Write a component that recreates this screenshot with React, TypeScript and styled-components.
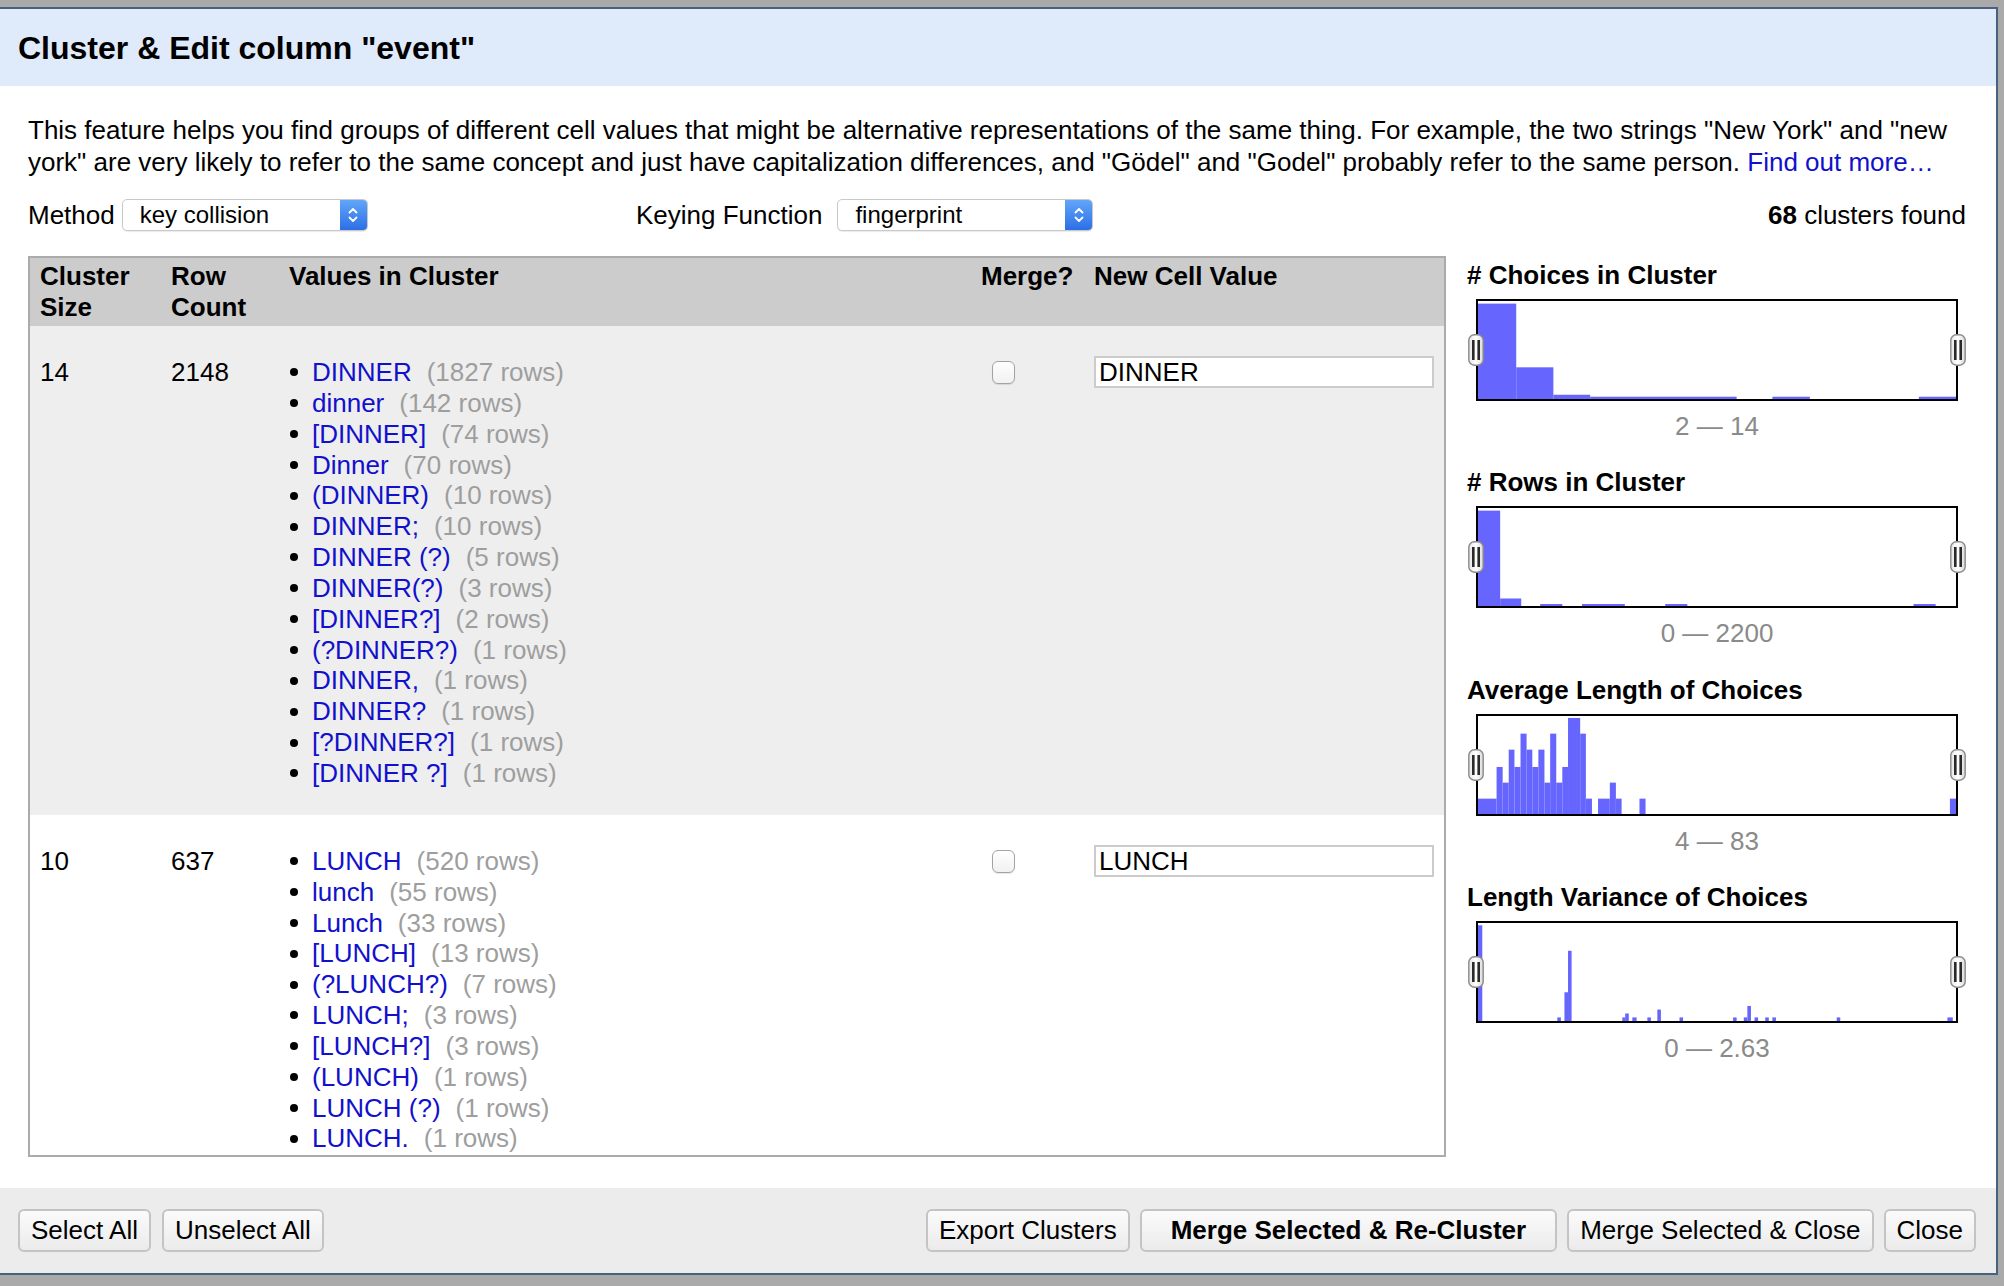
import React from "react";
import styled, { createGlobalStyle } from "styled-components";

const GlobalStyle = createGlobalStyle`
  html, body { margin: 0; padding: 0; }
  body {
    background: #aaaaaa;
    font-family: "Liberation Sans", Arial, Helvetica, sans-serif;
    font-size: 26px;
    color: #000;
    overflow: hidden;
  }
  * { box-sizing: border-box; }
`;

const Page = styled.div`
  width: 2004px;
  height: 1286px;
  padding-top: 7px;
  overflow: hidden;
  background: #aaaaaa;
`;

const Dialog = styled.div`
  margin-left: -2px;
  width: 2000px;
  height: 1268px;
  border: 2px solid #47617f;
  background: #fff;
  display: flex;
  flex-direction: column;
`;

const Header = styled.div`
  height: 77px;
  flex: none;
  background: #dfeafb;
  display: flex;
  align-items: center;
  padding-left: 18px;
`;

const Title = styled.h1`
  margin: 0;
  font-size: 32px;
  font-weight: bold;
  line-height: 1;
`;

const Body = styled.div`
  flex: 1;
  padding: 28px 28px 0 28px;
  display: flex;
  flex-direction: column;
`;

const Description = styled.p`
  margin: 0;
  line-height: 32px;
`;

const Link = styled.a`
  color: #1111cc;
  text-decoration: none;
`;

const Controls = styled.div`
  margin-top: 21px;
  height: 32px;
  display: grid;
  grid-template-columns: 608px auto 1fr;
  align-items: center;
`;

const Field = styled.div<{ $gap: number }>`
  display: flex;
  align-items: center;
  gap: ${(p) => p.$gap}px;
`;

const Select = styled.div<{ $w: number }>`
  width: ${(p) => p.$w}px;
  height: 32px;
  border: 1px solid #c9c9c9;
  border-radius: 5px;
  background: #fff;
  box-shadow: 0 1px 1px rgba(0, 0, 0, 0.08);
  display: flex;
  align-items: center;
  font-size: 24px;
  padding-left: 17px;
  overflow: hidden;
`;

const SelectArrow = styled.span`
  margin-left: auto;
  width: 27px;
  height: 100%;
  background: linear-gradient(#62a6f9, #2c6fe6);
  display: flex;
  align-items: center;
  justify-content: center;
`;

const Count = styled.div`
  text-align: right;
  padding-right: 2px;
`;

const Main = styled.div`
  margin-top: 25px;
  display: flex;
  align-items: flex-start;
`;

const Table = styled.div`
  width: 1418px;
  height: 901px;
  flex: none;
  border: 2px solid #ababab;
  display: flex;
  flex-direction: column;
  overflow: hidden;
`;

const cols = "131px 118px 692px 113px 1fr";

const HeadRow = styled.div`
  display: grid;
  grid-template-columns: ${cols};
  background: #cccccc;
  height: 68px;
  flex: none;
`;

const HeadCell = styled.div`
  padding: 3px 10px 0 10px;
  font-weight: bold;
  line-height: 31px;
`;

const Rows = styled.div`
  flex: 1;
  overflow: hidden;
`;

const Row = styled.div<{ $shade: boolean }>`
  display: grid;
  grid-template-columns: ${cols};
  background: ${(p) => (p.$shade ? "#eeeeee" : "#ffffff")};
`;

const Cell = styled.div`
  padding: 31px 10px 26px 10px;
  line-height: 30.85px;
`;

const Line = styled.div`
  height: 30.85px;
  display: flex;
  align-items: center;
`;

const ValueList = styled.ul`
  margin: 0;
  padding: 0;
  list-style: none;
`;

const ValueItem = styled.li`
  display: flex;
  align-items: center;
  height: 30.85px;
  white-space: nowrap;
  &::before {
    content: "";
    width: 8px;
    height: 8px;
    border-radius: 50%;
    background: #000;
    margin: 0 14px 0 1px;
    flex: none;
  }
`;

const ValueLink = styled.a`
  color: #1111cc;
  text-decoration: none;
`;

const RowCount = styled.span`
  color: #9e9e9e;
  margin-left: 15px;
`;

const Check = styled.span`
  width: 23px;
  height: 23px;
  margin-left: 11px;
  border: 1.5px solid #a3a3a3;
  border-radius: 6px;
  background: linear-gradient(#ffffff, #f1f1f1);
  box-shadow: 0 1px 1px rgba(0, 0, 0, 0.1);
`;

const TextInput = styled.input`
  width: 340px;
  height: 32px;
  border: 2px solid #cccccc;
  padding: 0 3px;
  font-family: inherit;
  font-size: 26px;
  color: #000;
  background: #fff;
  outline: none;
`;

const Side = styled.div`
  margin-left: 21px;
  flex: 1;
  padding-top: 4px;
  display: flex;
  flex-direction: column;
`;

const Facet = styled.section`
  display: flex;
  flex-direction: column;
  margin-bottom: 25.3px;
`;

const FacetTitle = styled.div`
  font-weight: bold;
  line-height: 31px;
`;

const ChartBox = styled.div`
  position: relative;
  margin: 8px 0 0 9px;
  width: 482px;
  height: 102px;
  border: 2px solid #000;
  background: #fff;
`;

const Handle = styled.span<{ $side: "left" | "right" }>`
  position: absolute;
  top: 50%;
  ${(p) => p.$side}: -10px;
  transform: translateY(-50%);
  width: 16px;
  height: 32px;
  display: block;
`;

const RangeLabel = styled.div`
  margin: 10px 0 0 9px;
  width: 482px;
  text-align: center;
  color: #8a8a8a;
  line-height: 31px;
`;

const Footer = styled.div`
  height: 85px;
  flex: none;
  background: #ececec;
  display: flex;
  align-items: center;
  justify-content: space-between;
  padding: 0 20px 0 18px;
`;

const ButtonGroup = styled.div<{ $gap: number }>`
  display: flex;
  gap: ${(p) => p.$gap}px;
`;

const Button = styled.button<{ $primary?: boolean }>`
  height: 43px;
  padding: 0 ${(p) => (p.$primary ? 29 : 11)}px;
  border: 2px solid #c4c4c4;
  border-radius: 6px;
  background: linear-gradient(#fbfbfb, #ebebeb);
  font-family: inherit;
  font-size: 26px;
  font-weight: ${(p) => (p.$primary ? "bold" : "normal")};
  color: #000;
`;

type Bar = [number, number, number];

const Chevrons = () => (
  <svg width="12" height="22" viewBox="0 0 12 22">
    <path d="M2.5 8.5 L6 5 L9.5 8.5" fill="none" stroke="#fff" strokeWidth="1.8" strokeLinecap="round" strokeLinejoin="round" />
    <path d="M2.5 13.5 L6 17 L9.5 13.5" fill="none" stroke="#fff" strokeWidth="1.8" strokeLinecap="round" strokeLinejoin="round" />
  </svg>
);

const HandleIcon = () => (
  <svg width="16" height="32" viewBox="0 0 16 32">
    <defs>
      <linearGradient id="hg" x1="0" y1="0" x2="1" y2="0">
        <stop offset="0" stopColor="#e4e4e4" />
        <stop offset="0.5" stopColor="#ffffff" />
        <stop offset="1" stopColor="#d8d8d8" />
      </linearGradient>
    </defs>
    <rect x="0.8" y="0.8" width="14.4" height="30.4" rx="5.5" fill="url(#hg)" stroke="#8a8a8a" strokeWidth="1.4" />
    <rect x="4" y="6" width="2.6" height="20" fill="#2a2a2a" />
    <rect x="9.4" y="6" width="2.6" height="20" fill="#2a2a2a" />
  </svg>
);

const Histogram = ({ bars }: { bars: Bar[] }) => (
  <svg width="100%" height="100%" viewBox="0 0 1338 300" preserveAspectRatio="none" style={{ display: "block" }}>
    {bars.map(([x0, x1, h], i) => (
      <rect key={i} x={x0} y={300 - h} width={x1 - x0} height={h} fill="#6666ff" />
    ))}
  </svg>
);

const facets: { title: string; range: string; bars: Bar[] }[] = [
  {
    title: "# Choices in Cluster",
    range: "2 — 14",
    bars: [
      [0, 107, 292],
      [107, 211, 97],
      [211, 314, 13],
      [314, 724, 7],
      [824, 929, 7],
      [1234, 1338, 7],
    ],
  },
  {
    title: "# Rows in Cluster",
    range: "0 — 2200",
    bars: [
      [0, 62, 292],
      [62, 121, 23],
      [174, 236, 6],
      [291, 411, 6],
      [524, 586, 6],
      [1219, 1281, 6],
    ],
  },
  {
    title: "Average Length of Choices",
    range: "4 — 83",
    bars: [
      [0, 52, 47],
      [52, 69, 144],
      [69, 86, 96],
      [86, 102, 197],
      [102, 119, 144],
      [119, 136, 246],
      [136, 152, 197],
      [152, 169, 144],
      [169, 186, 197],
      [186, 202, 96],
      [202, 219, 246],
      [219, 236, 96],
      [236, 252, 144],
      [252, 286, 294],
      [286, 302, 246],
      [302, 319, 47],
      [336, 369, 47],
      [369, 386, 96],
      [386, 402, 47],
      [452, 469, 47],
      [1321, 1338, 47],
    ],
  },
  {
    title: "Length Variance of Choices",
    range: "0 — 2.63",
    bars: [
      [0, 12, 293],
      [222, 232, 11],
      [242, 252, 88],
      [252, 262, 215],
      [404, 412, 11],
      [412, 422, 23],
      [432, 444, 11],
      [474, 484, 11],
      [502, 512, 35],
      [564, 574, 11],
      [714, 724, 11],
      [744, 754, 11],
      [754, 764, 46],
      [774, 784, 11],
      [804, 814, 11],
      [824, 834, 11],
      [1004, 1014, 11],
      [1314, 1329, 11],
    ],
  },
];

const clusters: { size: number; count: number; value: string; items: [string, number][] }[] = [
  {
    size: 14,
    count: 2148,
    value: "DINNER",
    items: [
      ["DINNER", 1827],
      ["dinner", 142],
      ["[DINNER]", 74],
      ["Dinner", 70],
      ["(DINNER)", 10],
      ["DINNER;", 10],
      ["DINNER (?)", 5],
      ["DINNER(?)", 3],
      ["[DINNER?]", 2],
      ["(?DINNER?)", 1],
      ["DINNER,", 1],
      ["DINNER?", 1],
      ["[?DINNER?]", 1],
      ["[DINNER ?]", 1],
    ],
  },
  {
    size: 10,
    count: 637,
    value: "LUNCH",
    items: [
      ["LUNCH", 520],
      ["lunch", 55],
      ["Lunch", 33],
      ["[LUNCH]", 13],
      ["(?LUNCH?)", 7],
      ["LUNCH;", 3],
      ["[LUNCH?]", 3],
      ["(LUNCH)", 1],
      ["LUNCH (?)", 1],
      ["LUNCH.", 1],
    ],
  },
];

export default function App() {
  return (
    <Page>
      <GlobalStyle />
      <Dialog>
        <Header>
          <Title>Cluster &amp; Edit column "event"</Title>
        </Header>
        <Body>
          <Description>
            <span>
              This feature helps you find groups of different cell values that might be alternative representations of
              the same thing. For example, the two strings "New York" and "new
            </span>
            <br />
            <span>
              york" are very likely to refer to the same concept and just have capitalization differences, and "Gödel"
              and "Godel" probably refer to the same person.
            </span>{" "}
            <Link href="#">Find out more…</Link>
          </Description>
          <Controls>
            <Field $gap={7}>
              <span>Method</span>
              <Select $w={246}>
                key collision
                <SelectArrow>
                  <Chevrons />
                </SelectArrow>
              </Select>
            </Field>
            <Field $gap={15}>
              <span>Keying Function</span>
              <Select $w={256}>
                fingerprint
                <SelectArrow>
                  <Chevrons />
                </SelectArrow>
              </Select>
            </Field>
            <Count>
              <b>68</b> clusters found
            </Count>
          </Controls>
          <Main>
            <Table>
              <HeadRow>
                <HeadCell>Cluster Size</HeadCell>
                <HeadCell>Row Count</HeadCell>
                <HeadCell>Values in Cluster</HeadCell>
                <HeadCell>Merge?</HeadCell>
                <HeadCell>New Cell Value</HeadCell>
              </HeadRow>
              <Rows>
                {clusters.map((c, i) => (
                  <Row key={c.value} $shade={i % 2 === 0}>
                    <Cell>{c.size}</Cell>
                    <Cell>{c.count}</Cell>
                    <Cell>
                      <ValueList>
                        {c.items.map(([v, n]) => (
                          <ValueItem key={v}>
                            <ValueLink href="#">{v}</ValueLink>
                            <RowCount>({n} rows)</RowCount>
                          </ValueItem>
                        ))}
                      </ValueList>
                    </Cell>
                    <Cell>
                      <Line>
                        <Check />
                      </Line>
                    </Cell>
                    <Cell>
                      <Line>
                        <TextInput defaultValue={c.value} />
                      </Line>
                    </Cell>
                  </Row>
                ))}
              </Rows>
            </Table>
            <Side>
              {facets.map((f) => (
                <Facet key={f.title}>
                  <FacetTitle>{f.title}</FacetTitle>
                  <ChartBox>
                    <Histogram bars={f.bars} />
                    <Handle $side="left">
                      <HandleIcon />
                    </Handle>
                    <Handle $side="right">
                      <HandleIcon />
                    </Handle>
                  </ChartBox>
                  <RangeLabel>{f.range}</RangeLabel>
                </Facet>
              ))}
            </Side>
          </Main>
        </Body>
        <Footer>
          <ButtonGroup $gap={11}>
            <Button>Select All</Button>
            <Button>Unselect All</Button>
          </ButtonGroup>
          <ButtonGroup $gap={10}>
            <Button>Export Clusters</Button>
            <Button $primary>Merge Selected &amp; Re-Cluster</Button>
            <Button>Merge Selected &amp; Close</Button>
            <Button>Close</Button>
          </ButtonGroup>
        </Footer>
      </Dialog>
    </Page>
  );
}
